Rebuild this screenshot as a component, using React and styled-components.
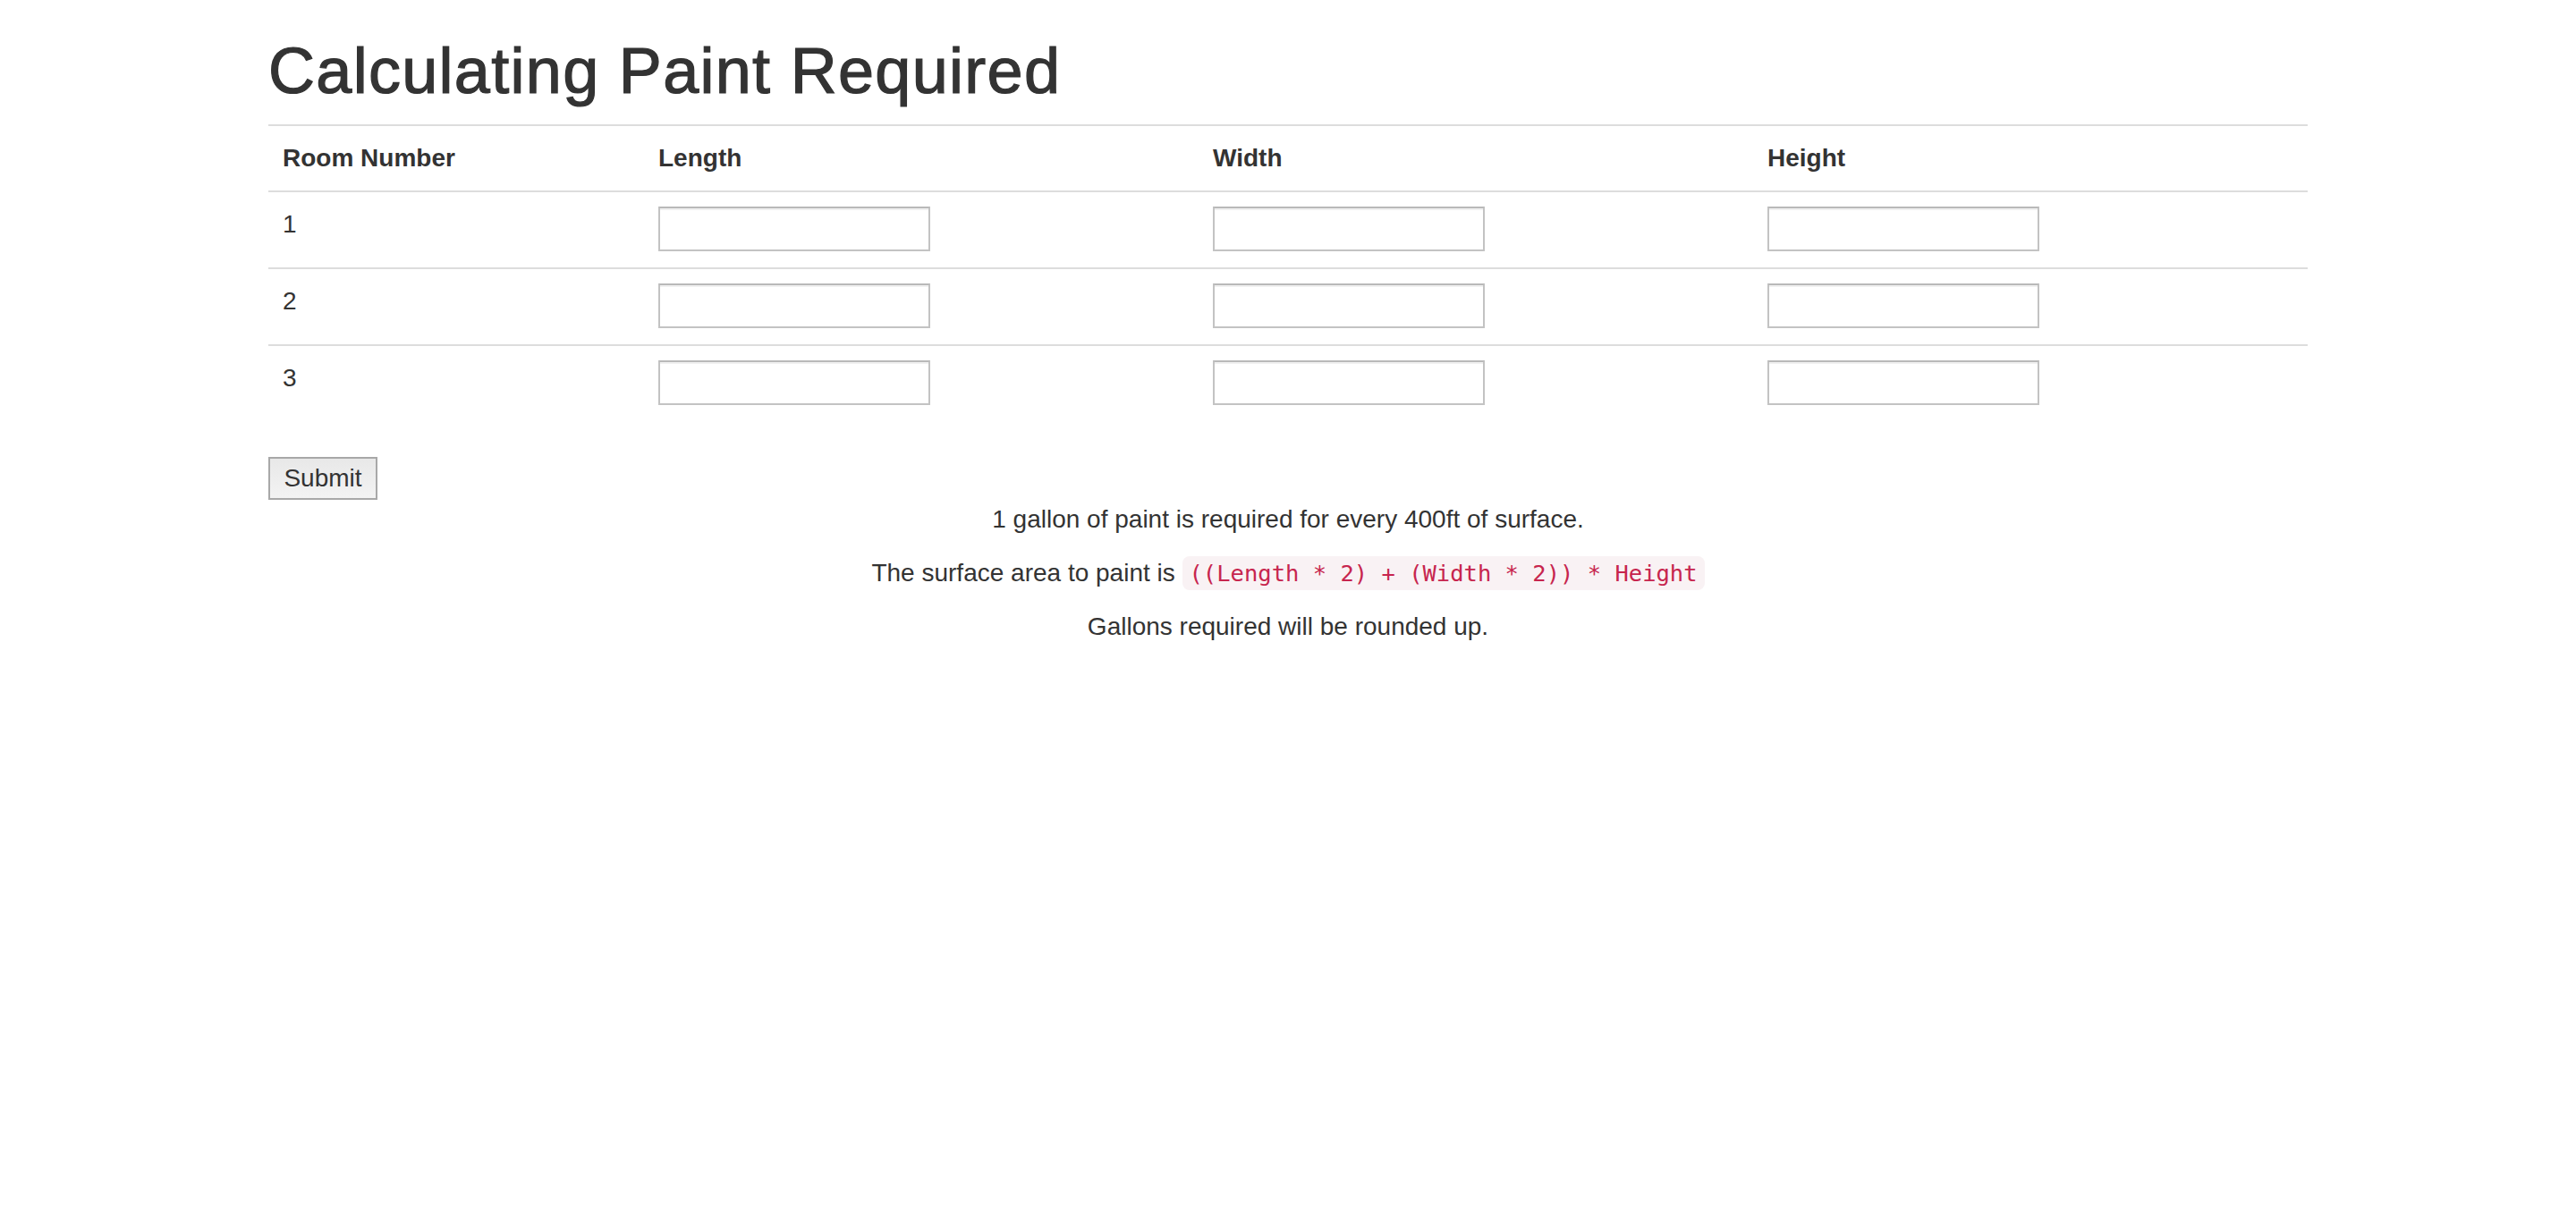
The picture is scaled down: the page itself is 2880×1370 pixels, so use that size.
import React from 'react'
import styled, { createGlobalStyle } from 'styled-components'

const rooms = [1, 2, 3]
const dims = ['Length', 'Width', 'Height']

const App = () => {
  return (
    <>
      <GlobalStyle />
      <Container>
        <Title>Calculating Paint Required</Title>
        <form onSubmit={(e) => e.preventDefault()}>
          <Table>
            <colgroup>
              <col style={{ width: 420 }} />
              <col style={{ width: 620 }} />
              <col style={{ width: 620 }} />
              <col style={{ width: 620 }} />
            </colgroup>
            <tbody>
              <tr>
                <HeadCell>Room Number</HeadCell>
                {dims.map((d) => (
                  <HeadCell key={d}>{d}</HeadCell>
                ))}
              </tr>
              {rooms.map((room) => (
                <tr key={room}>
                  <Cell>{room}</Cell>
                  {dims.map((d) => (
                    <Cell key={d}>
                      <DimInput type="text" name={`${d.toLowerCase()}${room}`} />
                    </Cell>
                  ))}
                </tr>
              ))}
            </tbody>
          </Table>
          <SubmitButton type="submit">Submit</SubmitButton>
        </form>
        <Notes>
          <p>1 gallon of paint is required for every 400ft of surface.</p>
          <p>
            The surface area to paint is <Code>((Length * 2) + (Width * 2)) * Height</Code>
          </p>
          <p>Gallons required will be rounded up.</p>
        </Notes>
      </Container>
    </>
  )
}

const GlobalStyle = createGlobalStyle`
  * { box-sizing: border-box; }
  body {
    margin: 0;
    background: #fff;
    color: #333;
    font-family: "Liberation Sans", Arial, sans-serif;
    font-size: 28px;
    line-height: 40px;
  }
`

const Container = styled.div`
  max-width: 2340px;
  margin: 0 auto;
  padding: 0 30px;
`

const Title = styled.h1`
  margin: 40px 0 20px;
  font-size: 72px;
  font-weight: normal;
  line-height: 79px;
  letter-spacing: 1.3px;
  color: #333;
  -webkit-text-stroke: 1.2px #333;
`

const Table = styled.table`
  width: 100%;
  border-collapse: collapse;
  border-spacing: 0;
  margin-bottom: 40px;
  table-layout: fixed;
`

const HeadCell = styled.th`
  padding: 16px;
  text-align: left;
  font-weight: bold;
  line-height: 40px;
  vertical-align: top;
  border-top: 2px solid #ddd;
`

const Cell = styled.td`
  padding: 16px;
  line-height: 40px;
  vertical-align: top;
  border-top: 2px solid #ddd;
`

const DimInput = styled.input`
  display: block;
  width: 304px;
  height: 50px;
  margin-bottom: 2px;
  padding: 2px 4px;
  border: 2px solid #c3c3c3;
  border-top-color: #b9b9b9;
  box-shadow: inset 0 2px 0 #f0f0f0;
  background: #fff;
  font: inherit;
  color: #333;
  outline: none;
`

const SubmitButton = styled.button`
  display: block;
  width: 122px;
  height: 48px;
  padding: 0;
  border: 2px solid #a8a8a8;
  background: linear-gradient(#e8e8e8, #f3f3f3);
  font-family: "Liberation Sans", Arial, sans-serif;
  font-size: 28px;
  color: #333;
  cursor: pointer;
`

const Notes = styled.div`
  margin-top: 2px;
  text-align: center;

  p {
    margin: 0 0 20px;
  }
`

const Code = styled.code`
  padding: 4px 8px;
  font-family: "DejaVu Sans Mono", "Liberation Mono", monospace;
  font-size: 25.5px;
  color: #c7254e;
  background: #f9f2f4;
  border-radius: 8px;
`

export default App
